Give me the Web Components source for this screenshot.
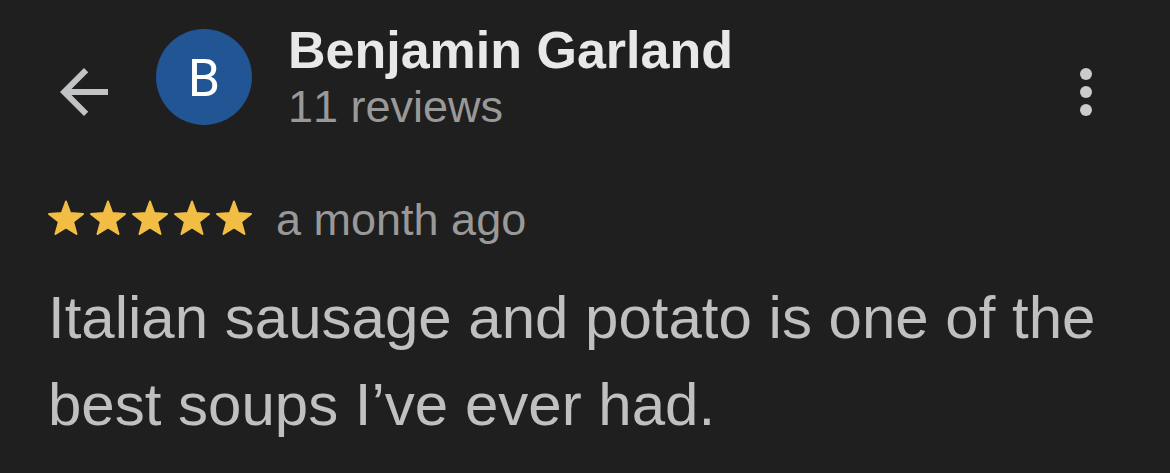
<!DOCTYPE html>
<html lang="en">
<head>
<meta charset="utf-8">
<meta name="viewport" content="width=device-width, initial-scale=1">
<title>Review</title>
<style>
body { margin: 0; background: #1f1f1f; color: #c0c0c0; font-family: "Liberation Sans", Arial, sans-serif; }
</style>
</head>
<body>
<review-card>
  <review-header slot="header" initial="B">
    <span slot="name">Benjamin Garland</span>
    <span slot="count">11 reviews</span>
  </review-header>
  <star-rating slot="rating" value="5"></star-rating>
  <span slot="time">a month ago</span>
  <span slot="text">Italian sausage and potato is one of the best soups I’ve ever had.</span>
</review-card>
<script>
class ReviewHeader extends HTMLElement {
  constructor() {
    super();
    this.attachShadow({ mode: 'open' }).innerHTML = `
      <style>
        :host { display: flex; align-items: center; }
        button { all: unset; display: flex; cursor: pointer; }
        svg { display: block; }
        .back { margin: 30px 48px 0 12px; }
        .avatar { flex: none; box-sizing: border-box; width: 96px; height: 96px; padding-top: 4px; border-radius: 50%; background: #225594;
          color: #fff; display: grid; place-items: center; font: 52px/52px Roboto, sans-serif; }
        .who { flex: 1; min-width: 0; margin-left: 36px; }
        h1 { margin: 0; font-size: 52px; line-height: 60px; font-weight: 700; color: #e8e8e8; }
        p { margin: 0; font-size: 45px; line-height: 54px; color: #999; font-kerning: none; }
        .more { margin: 30px 12px 0 0; }
      </style>
      <button class="back" type="button" aria-label="Back">
        <svg width="48" height="48" viewBox="4 4 16 16" fill="#c2c3c5"><path d="M20 11H7.830l5.590-5.590L12 4l-8 8 8 8 1.410-1.410L7.830 13H20z"/></svg>
      </button>
      <div class="avatar"><span></span></div>
      <div class="who"><h1><slot name="name"></slot></h1><p><slot name="count"></slot></p></div>
      <button class="more" type="button" aria-label="More options">
        <svg width="48" height="48" viewBox="0 0 48 48" fill="#cbcbcb"><circle cx="24" cy="6" r="6"/><circle cx="24" cy="24" r="6"/><circle cx="24" cy="42" r="6"/></svg>
      </button>`;
    this.shadowRoot.querySelector('.avatar span').textContent = this.getAttribute('initial');
  }
}
class StarRating extends HTMLElement {
  constructor() {
    super();
    const n = Number(this.getAttribute('value'));
    this.attachShadow({ mode: 'open' }).innerHTML = `
      <style>:host { display: flex; gap: 6px; padding-bottom: 4px; } svg { display: block; }</style>` +
      '<svg width="36" height="36" viewBox="0 0 36 36" fill="#f1bd44" stroke="#f1bd44" stroke-width="2" stroke-linejoin="round" aria-hidden="true"><path d="M18 1.500L22.200 13 35 14l-9.900 7.800 3.400 12.200L18 27.300 7.500 34l3.400-12.200L1 14l12.800-1z"/></svg>'.repeat(n);
    this.setAttribute('role', 'img');
    this.setAttribute('aria-label', n + ' stars');
  }
}
class ReviewCard extends HTMLElement {
  constructor() {
    super();
    this.attachShadow({ mode: 'open' }).innerHTML = `
      <style>
        :host { display: block; padding: 20px 48px 24px; }
        .meta { display: flex; align-items: center; gap: 24px; margin-top: 58px; font-size: 45px; line-height: 56px; color: #999; }
        .text { margin: 26px 0 0; font-size: 60px; line-height: 87px; color: #c0c0c0; }
      </style>
      <article>
        <slot name="header"></slot>
        <div class="meta"><slot name="rating"></slot><slot name="time"></slot></div>
        <p class="text"><slot name="text"></slot></p>
      </article>`;
  }
}
customElements.define('review-header', ReviewHeader);
customElements.define('star-rating', StarRating);
customElements.define('review-card', ReviewCard);
</script>
</body>
</html>
